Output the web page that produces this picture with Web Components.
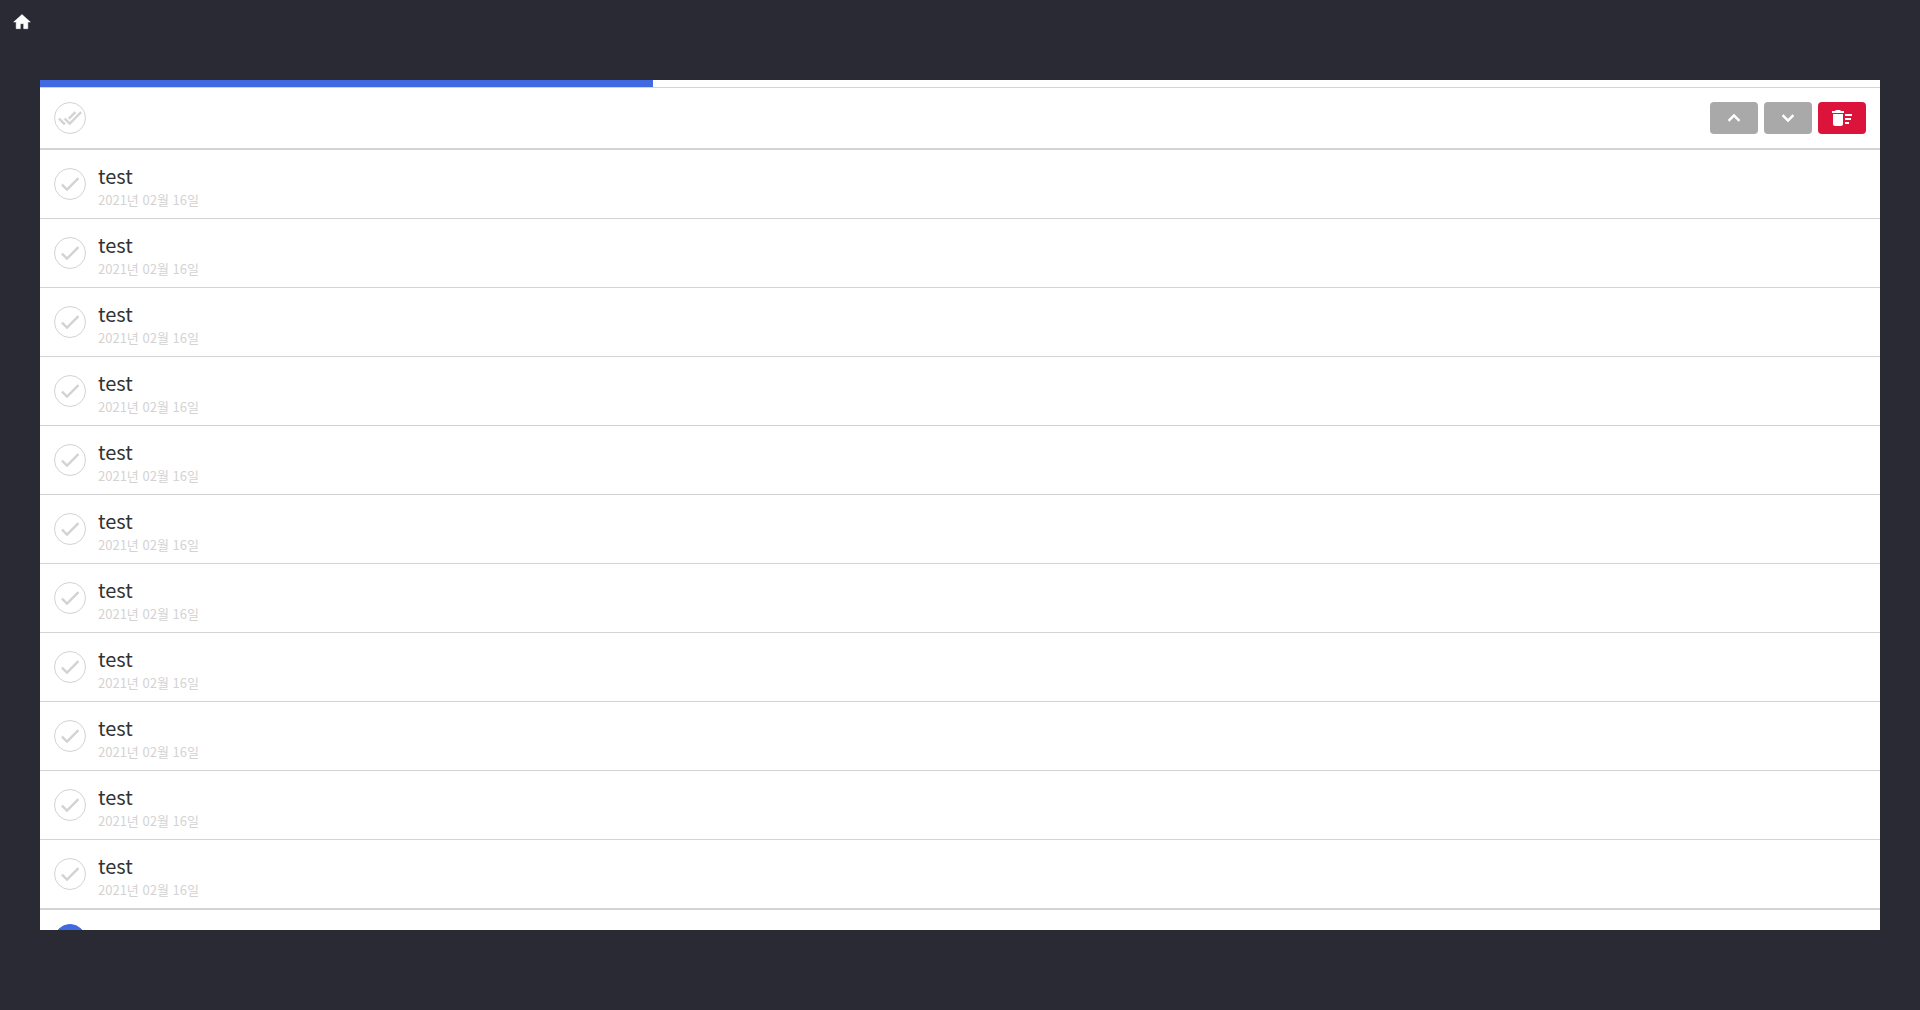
<!DOCTYPE html>
<html lang="ko">
<head>
<meta charset="utf-8">
<title>Todo</title>
<style>
body { margin: 0; background: #2a2a35; color: #333; font-family: "Noto Sans CJK KR", sans-serif; }
</style>
</head>
<body>
<todo-app></todo-app>
<script>
const ICONS = {
  home: 'M10 20v-6h4v6h5v-8h3L12 3 2 12h3v8z',
  done: 'M9 16.2L4.8 12l-1.4 1.4L9 19 21 7l-1.4-1.4L9 16.2z',
  doneAll: 'M18 7l-1.41-1.41-6.34 6.34 1.41 1.41L18 7zm4.24-1.41L11.66 16.17 7.48 12l-1.41 1.41L11.66 19l12-12-1.42-1.41zM.41 13.41L6 19l1.41-1.41L1.83 12 .41 13.41z',
  up: 'M12 8l-6 6 1.41 1.41L12 10.83l4.59 4.58L18 14z',
  down: 'M16.59 8.59L12 13.17 7.41 8.59 6 10l6 6 6-6z',
  sweep: 'M15 16h4v2h-4zm0-8h7v2h-7zm0 4h6v2h-6zM3 18c0 1.1.9 2 2 2h6c1.1 0 2-.9 2-2V8H3v10zM14 5h-3l-1-1H6L5 5H2v2h12z'
};

class MdIcon extends HTMLElement {
  connectedCallback() {
    this.attachShadow({ mode: 'open' }).innerHTML = `
      <style>
        :host { display: block; width: var(--icon-size, 24px); height: var(--icon-size, 24px); flex: none; }
        svg { display: block; width: 100%; height: 100%; fill: currentColor; stroke: currentColor; stroke-width: var(--icon-stroke, 0.6); overflow: visible; }
      </style>
      <svg viewBox="0 0 24 24" aria-hidden="true"><path d="${ICONS[this.getAttribute('name')]}"/></svg>`;
  }
}
customElements.define('md-icon', MdIcon);

class CheckButton extends HTMLElement {
  connectedCallback() {
    this.attachShadow({ mode: 'open' }).innerHTML = `
      <style>
        :host { display: block; flex: none; }
        button { display: flex; align-items: center; justify-content: center; box-sizing: border-box;
          width: 32px; height: 32px; padding: 0; border: 1px solid lightgray; border-radius: 50%;
          background: none; color: lightgray; cursor: pointer; }
        :host([checked]) button { background: royalblue; border-color: royalblue; color: white; }
      </style>
      <button type="button" aria-label="${this.getAttribute('label')}"><md-icon name="${this.getAttribute('icon')}"></md-icon></button>`;
  }
}
customElements.define('check-button', CheckButton);

class ActionButton extends HTMLElement {
  connectedCallback() {
    this.attachShadow({ mode: 'open' }).innerHTML = `
      <style>
        :host { display: block; }
        button { display: flex; align-items: center; justify-content: center; width: 48px; height: 32px;
          padding: 0; border: 0; border-radius: 4px; background: darkgray; color: white; cursor: pointer; }
        :host([danger]) button { background: crimson; --icon-stroke: 0; }
      </style>
      <button type="button" aria-label="${this.getAttribute('label')}"><md-icon name="${this.getAttribute('icon')}"></md-icon></button>`;
  }
}
customElements.define('action-button', ActionButton);

class TodoToolbar extends HTMLElement {
  connectedCallback() {
    this.attachShadow({ mode: 'open' }).innerHTML = `
      <style>
        :host { display: flex; align-items: center; justify-content: space-between; padding: 14px; border-bottom: 2px solid lightgray; }
        .actions { display: flex; gap: 6px; }
      </style>
      <slot></slot>
      <div class="actions"><slot name="action"></slot></div>`;
  }
}
customElements.define('todo-toolbar', TodoToolbar);

class TodoItem extends HTMLElement {
  connectedCallback() {
    this.attachShadow({ mode: 'open' }).innerHTML = `
      <style>
        :host { display: flex; align-items: center; gap: 12px; padding: 10px 14px; border-bottom: 1px solid lightgray; }
        :host(:last-of-type) { border-bottom-width: 2px; }
        .title { font-size: 20px; line-height: 32px; }
        .date { display: block; font-size: 13px; line-height: 16px; color: lightgray; }
      </style>
      <check-button icon="done" label="완료"></check-button>
      <div><div class="title"><slot></slot></div><time class="date"><slot name="date"></slot></time></div>`;
  }
}
customElements.define('todo-item', TodoItem);

class ProgressLine extends HTMLElement {
  connectedCallback() {
    this.attachShadow({ mode: 'open' }).innerHTML = `
      <style>
        :host { display: block; border-bottom: 1px solid lightgray; }
        div { height: 7px; width: calc(100% * ${this.getAttribute('done')} / ${this.getAttribute('total')}); background: royalblue; }
      </style>
      <div></div>`;
  }
}
customElements.define('progress-line', ProgressLine);

class TodoApp extends HTMLElement {
  connectedCallback() {
    const item = '<todo-item>test<span slot="date">2021년 02월 16일</span></todo-item>';
    this.attachShadow({ mode: 'open' }).innerHTML = `
      <style>
        :host { display: flex; flex-direction: column; box-sizing: border-box; height: 100vh; padding-bottom: 80px; }
        nav { box-sizing: border-box; height: 80px; padding: 12px; flex: none; }
        a { display: block; width: 20px; color: white; --icon-size: 20px; }
        main { flex: 1; min-height: 0; margin: 0 40px; overflow: hidden; background: white; }
      </style>
      <nav><a href="#" aria-label="홈"><md-icon name="home"></md-icon></a></nav>
      <main>
        <progress-line done="1" total="3"></progress-line>
        <todo-toolbar>
          <check-button icon="doneAll" label="모두 완료"></check-button>
          <action-button slot="action" icon="up" label="위로"></action-button>
          <action-button slot="action" icon="down" label="아래로"></action-button>
          <action-button slot="action" icon="sweep" label="삭제" danger></action-button>
        </todo-toolbar>
        <section>${item.repeat(11)}</section>
        <todo-toolbar><check-button checked icon="doneAll" label="모두 취소"></check-button></todo-toolbar>
      </main>`;
  }
}
customElements.define('todo-app', TodoApp);
</script>
</body>
</html>
